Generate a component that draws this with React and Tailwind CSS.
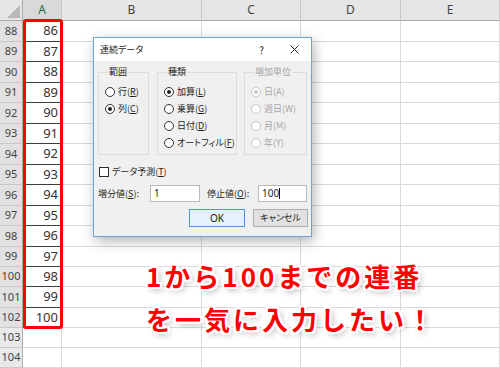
import React from 'react';

const heights = [21, 20, 21, 20, 21, 20, 21, 20, 21, 20, 21, 20, 20, 21, 20, 20, 20];
const rows = heights.map((h, i) => ({ num: 88 + i, h, value: i < 15 ? 86 + i : null }));

const Radio = ({ checked, disabled }) => (
  <span
    className={`flex h-[10px] w-[10px] shrink-0 items-center justify-center rounded-full border bg-white ${
      disabled ? 'border-[#c8c8c8]' : 'border-[#333]'
    }`}
  >
    {checked && <span className={`h-[4px] w-[4px] rounded-full ${disabled ? 'bg-[#c8c8c8]' : 'bg-[#222]'}`} />}
  </span>
);

const Option = ({ checked, disabled, children }) => (
  <div className={`flex h-[17px] items-center gap-[3px] ${disabled ? 'text-[#a6a6a6]' : 'text-[#1e1e1e]'}`}>
    <Radio checked={checked} disabled={disabled} />
    <span>{children}</span>
  </div>
);

const Group = ({ title, width, disabled, children }) => (
  <fieldset className={`h-[89px] ${width} border border-[#dcdcdc] pl-[6px]`}>
    <legend className={`ml-[3px] px-[1px] leading-[12px] ${disabled ? 'text-[#a6a6a6]' : 'text-[#1e1e1e]'}`}>{title}</legend>
    <div className="flex flex-col pt-[5px]">{children}</div>
  </fieldset>
);

const Dialog = () => (
  <div className="absolute left-[93px] top-[37px] flex h-[200px] w-[219px] flex-col border border-[#6fa3d8] bg-[#f0f0f0] font-['Noto_Sans_CJK_JP',sans-serif] text-[9px] text-[#1e1e1e] shadow-[2px_4px_12px_rgba(0,0,0,0.3)] [font-feature-settings:'palt']">
    <div className="flex h-[23px] items-center bg-white pl-[6px]">
      <span>連続データ</span>
      <div className="ml-auto flex items-center gap-[26px] pr-[12px]">
        <span className="text-[10px]">?</span>
        <svg width="9" height="9" viewBox="0 0 9 9">
          <path d="M0.5 0.5 L8.5 8.5 M8.5 0.5 L0.5 8.5" stroke="#222" strokeWidth="1" />
        </svg>
      </div>
    </div>
    <div className="flex flex-1 flex-col pl-[4px] pr-[3px] pt-[5px]">
      <div className="flex gap-[8px]">
        <Group title="範囲" width="w-[51px]">
          <Option>行(<u>R</u>)</Option>
          <Option checked>列(<u>C</u>)</Option>
        </Group>
        <Group title="種類" width="w-[80px]">
          <Option checked>加算(<u>L</u>)</Option>
          <Option>乗算(<u>G</u>)</Option>
          <Option>日付(<u>D</u>)</Option>
          <Option>オートフィル(<u>F</u>)</Option>
        </Group>
        <div className="-ml-[1px]">
          <Group title="増加単位" width="w-[63px]" disabled>
            <Option checked disabled>日(A)</Option>
            <Option disabled>週日(W)</Option>
            <Option disabled>月(M)</Option>
            <Option disabled>年(Y)</Option>
          </Group>
        </div>
      </div>
      <div className="mt-[8px] flex h-[17px] items-center gap-[3px] pl-[1px]">
        <span className="h-[10px] w-[10px] border border-[#333] bg-white" />
        <span>データ予測(<u>T</u>)</span>
      </div>
      <div className="mt-[5px] flex h-[17px] items-center">
        <span className="w-[52px]">増分値(<u>S</u>):</span>
        <div className="flex h-[17px] w-[50px] items-center border border-[#b9b9b9] bg-white pl-[3px] font-['Noto_Sans',sans-serif] text-[10px]">1</div>
        <span className="ml-[7px] w-[51px]">停止値(<u>O</u>):</span>
        <div className="flex h-[17px] w-[49px] items-center border border-[#b9b9b9] bg-white pl-[3px] font-['Noto_Sans',sans-serif] text-[10px]">
          100<span className="h-[11px] w-px bg-[#111]" />
        </div>
      </div>
      <div className="mt-[7px] flex justify-end gap-[8px]">
        <div className="flex h-[18px] w-[56px] items-center justify-center border border-[#4a94dd] bg-[#e5f1fb] font-['Noto_Sans',sans-serif] text-[10px]">OK</div>
        <div className="flex h-[18px] w-[55px] items-center justify-center border border-[#adadad] bg-[#e1e1e1]">キャンセル</div>
      </div>
    </div>
  </div>
);

const App = () => {
  return (
    <div className="relative h-[368px] w-[500px] overflow-hidden bg-white font-['Noto_Sans',sans-serif]">
      <div className="grid grid-cols-[23px_39px_140px_99px_100px_99px]">
        <div className="flex h-[21px] items-end justify-end border-b border-r border-[#ababab] bg-[#e6e6e6] pb-[2px] pr-[2px]">
          <svg width="13" height="13" viewBox="0 0 13 13">
            <polygon points="13,0 13,13 0,13" fill="#b8b8b8" />
          </svg>
        </div>
        {['A', 'B', 'C', 'D', 'E'].map((c) => (
          <div
            key={c}
            className={`flex h-[21px] items-center justify-center border-b border-r border-b-[#ababab] border-r-[#c8c8c8] text-[12px] ${
              c === 'A' ? 'bg-[#d9d9d9] text-[#2e6b4c]' : 'bg-[#e6e6e6] text-[#444]'
            }`}
          >
            {c}
          </div>
        ))}
        {rows.map((r) => (
          <React.Fragment key={r.num}>
            <div
              className={`flex ${r.h === 21 ? 'h-[21px]' : 'h-[20px]'} items-center justify-center border-b border-r border-b-[#c8c8c8] border-r-[#ababab] text-[11px] text-[#444] ${
                r.value ? 'bg-[#e1e1e1]' : 'bg-[#e9e9e9]'
              }`}
            >
              {r.num}
            </div>
            <div
              className={`flex ${r.h === 21 ? 'h-[21px]' : 'h-[20px]'} items-center justify-end border-b border-r border-r-[#dadada] pr-[3px] text-[13px] text-[#333] ${
                r.value ? 'border-b-[#3c3c3c]' : 'border-b-[#dadada]'
              }`}
            >
              {r.value}
            </div>
            {[0, 1, 2, 3].map((k) => (
              <div key={k} className={`${r.h === 21 ? 'h-[21px]' : 'h-[20px]'} border-b border-r border-[#dadada]`} />
            ))}
          </React.Fragment>
        ))}
      </div>

      <div className="absolute left-[23px] top-[19px] h-[310px] w-[40px] rounded-[3px] border-[3px] border-[#ff0000]" />

      <Dialog />

      <div className="absolute left-[146px] top-[254px] font-['Noto_Sans_CJK_JP',sans-serif] text-[26px] font-bold leading-[43px] tracking-[3px] text-[#ff0000] [text-shadow:2px_0_0_#fff,-2px_0_0_#fff,0_2px_0_#fff,0_-2px_0_#fff,2px_2px_0_#fff,-2px_-2px_0_#fff,2px_-2px_0_#fff,-2px_2px_0_#fff,3px_3px_6px_rgba(0,0,0,0.35)]">
        <div>1から100までの連番</div>
        <div>を一気に入力したい！</div>
      </div>
    </div>
  );
};

export default App;
